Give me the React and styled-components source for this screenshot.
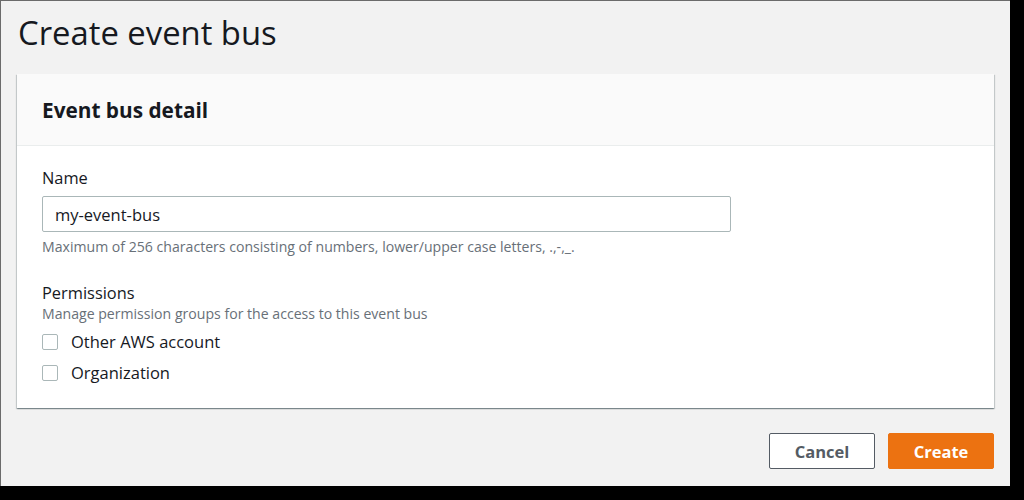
import React from "react";
import styled, { createGlobalStyle } from "styled-components";

const Global = createGlobalStyle`
  html, body { margin: 0; padding: 0; background: #000; }
  body { width: 1024px; height: 500px; overflow: hidden; }
  * { box-sizing: border-box; }
`;

const Frame = styled.div`
  width: 1024px;
  height: 500px;
  background: #000;
  padding: 0 14px 14px 0;
`;

const Window = styled.div`
  width: 1010px;
  height: 486px;
  background: #f2f2f2;
  border-left: 1px solid #6b6b6b;
  border-top: 1px solid #6b6b6b;
  font-family: "Open Sans", "Liberation Sans", sans-serif;
  color: #16191f;
  display: flex;
  flex-direction: column;
  padding: 10px 16px 0 16px;
`;

const Title = styled.h1`
  margin: 0 0 0 1px;
  font-size: 32.8px;
  font-weight: 400;
  line-height: 44px;
  color: #16191f;
`;

const Card = styled.section`
  margin-top: 19px;
  background: #fff;
  box-shadow: 0 1px 1px 0 rgba(0, 28, 36, 0.3), 1px 1px 1px 0 rgba(0, 28, 36, 0.15),
    -1px 1px 1px 0 rgba(0, 28, 36, 0.15);
  width: 977px;
`;

const CardHeader = styled.div`
  background: #fafafa;
  border-bottom: 1px solid #eaeded;
  height: 72px;
  display: flex;
  align-items: center;
  padding: 0 25px;
`;

const CardTitle = styled.h2`
  margin: 0;
  font-size: 20.8px;
  font-weight: 700;
  line-height: 28px;
`;

const CardBody = styled.div`
  padding: 21px 25px 20px;
  display: flex;
  flex-direction: column;
`;

const Label = styled.div`
  font-size: 16.4px;
  line-height: 22px;
  color: #16191f;
`;

const Input = styled.input`
  margin-top: 7px;
  width: 689px;
  height: 36px;
  border: 1px solid #aab7b8;
  border-radius: 2px;
  padding: 0 12px;
  font-family: inherit;
  font-size: 16.5px;
  color: #16191f;
  background: #fff;
  outline: none;
`;

const Hint = styled.div`
  margin-top: ${(p) => p.$top || 0}px;
  font-size: 14.1px;
  line-height: 20px;
  color: #687078;
`;

const Section = styled.div`
  margin-top: ${(p) => p.$top || 0}px;
  display: flex;
  flex-direction: column;
`;

const Checks = styled.div`
  margin-top: 2px;
  display: flex;
  flex-direction: column;
`;

const CheckRow = styled.label`
  display: flex;
  align-items: center;
  gap: 13px;
  height: 31px;
  font-size: 16.5px;
  color: #16191f;
`;

const Box = styled.span`
  width: 16px;
  height: 16px;
  border: 1px solid #aab7b8;
  border-radius: 2px;
  background: #fff;
`;

const Footer = styled.div`
  display: flex;
  justify-content: flex-end;
  gap: 13px;
  margin-top: 25px;
  width: 977px;
`;

const Button = styled.button`
  width: 106px;
  height: 36px;
  border-radius: 2px;
  font-family: inherit;
  font-size: 16.5px;
  font-weight: 700;
  border: 1px solid ${(p) => (p.$primary ? "#ec7211" : "#545b64")};
  background: ${(p) => (p.$primary ? "#ec7211" : "#fff")};
  color: ${(p) => (p.$primary ? "#fff" : "#545b64")};
`;

export default function App() {
  return (
    <Frame>
      <Global />
      <Window>
        <Title>Create event bus</Title>
        <Card>
          <CardHeader>
            <CardTitle>Event bus detail</CardTitle>
          </CardHeader>
          <CardBody>
            <Label>Name</Label>
            <Input defaultValue="my-event-bus" />
            <Hint $top={5}>
              Maximum of 256 characters consisting of numbers, lower/upper case letters, .,-,_.
            </Hint>
            <Section $top={25}>
              <Label>Permissions</Label>
              <Hint>Manage permission groups for the access to this event bus</Hint>
              <Checks>
                <CheckRow>
                  <Box />
                  Other AWS account
                </CheckRow>
                <CheckRow>
                  <Box />
                  Organization
                </CheckRow>
              </Checks>
            </Section>
          </CardBody>
        </Card>
        <Footer>
          <Button>Cancel</Button>
          <Button $primary>Create</Button>
        </Footer>
      </Window>
    </Frame>
  );
}
